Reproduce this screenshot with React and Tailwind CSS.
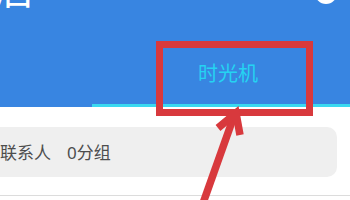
import React from "react";

export default function App() {
  return (
    <div
      className="relative w-[350px] h-[200px] overflow-hidden bg-white"
      style={{ fontFamily: '"Noto Sans", "Noto Sans CJK SC", sans-serif' }}
    >
      {/* Header */}
      <div className="h-[107px] bg-[#3885e1] flex flex-col">
        <div className="h-[41px] flex justify-between items-start">
          <div className="text-white text-[40px] leading-[40px] mt-[-31px] ml-[-6px]">后</div>
          <div className="w-[22px] h-[22px] rounded-full bg-white mt-[-18px] mr-[13px]"></div>
        </div>
        <div className="flex-1 flex">
          <div className="w-[92px]"></div>
          <div className="flex-1 flex flex-col">
            <div className="flex-1 flex items-center pl-[106px] pt-[2px]">
              <span className="text-[20px] leading-[20px] text-[#25d3f2]">时光机</span>
            </div>
            <div className="h-[3px] bg-[#3ad9f0]"></div>
          </div>
        </div>
      </div>

      {/* Content */}
      <div className="pt-[20px] pr-[13px]">
        <div className="h-[50px] rounded-r-[10px] bg-[#efefef] flex items-center text-[17px] leading-[17px] text-[#4d4d4d]">
          <span>联系人</span>
          <span className="ml-[16px]">0分组</span>
        </div>
      </div>
      <div className="mt-[18px] h-[1px] bg-[#dcdcdc]"></div>

      {/* Annotation box */}
      <div className="absolute left-[156px] top-[41px] w-[157px] h-[75px] border-[7px] border-[#d8393d]"></div>

      {/* Annotation arrow */}
      <svg className="absolute left-0 top-0" width="350" height="200" viewBox="0 0 350 200">
        <path
          d="M202 206 L234 116"
          stroke="#d8393d"
          strokeWidth="7.5"
          fill="none"
        />
        <path
          d="M218 128 L236 113 L240 135"
          stroke="#d8393d"
          strokeWidth="7.5"
          fill="none"
          strokeLinejoin="miter"
        />
      </svg>
    </div>
  );
}
